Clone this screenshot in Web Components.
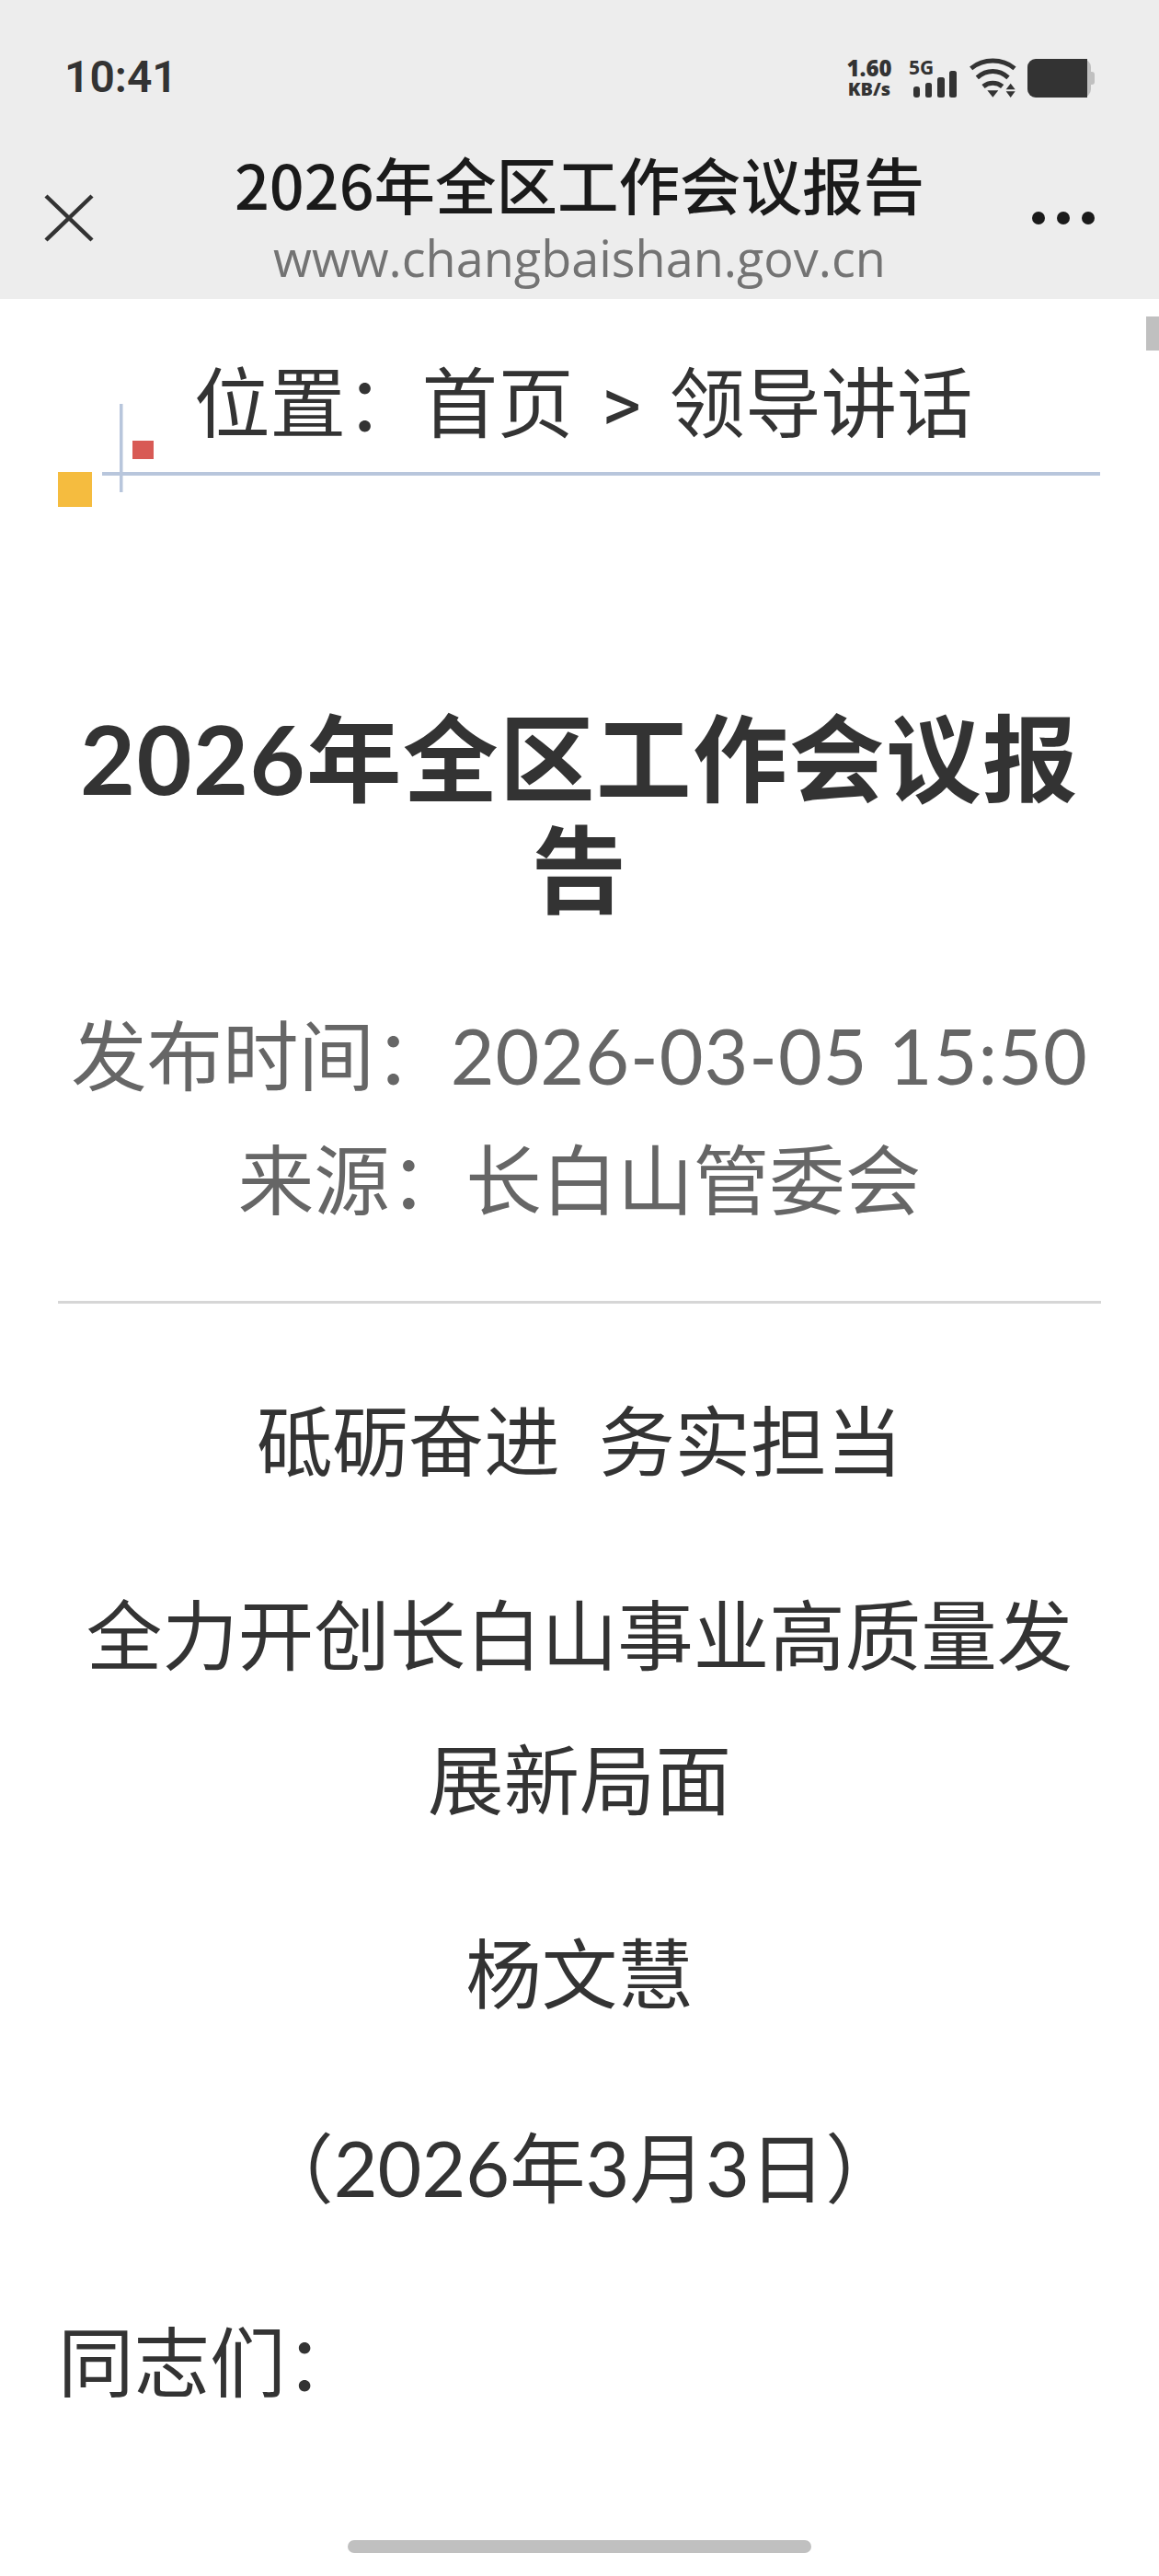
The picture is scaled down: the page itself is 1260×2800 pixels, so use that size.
<!DOCTYPE html>
<html lang="zh-CN">
<head>
<meta charset="utf-8">
<title>2026年全区工作会议报告</title>
<style>
  html, body { margin: 0; padding: 0; background: #fff; }
  body { width: 1260px; height: 2800px; overflow: hidden; position: relative; font-family: Lato, "Noto Sans CJK SC", sans-serif; color: #333; }
</style>
</head>
<body>
<app-chrome page-title="2026年全区工作会议报告" host-name="www.changbaishan.gov.cn"></app-chrome>
<bread-crumb>位置：首页 &gt; 领导讲话</bread-crumb>
<article-head source="来源：长白山管委会" published-label="发布时间：" published="2026-03-05 15:50">2026年全区工作会议报告</article-head>
<article-body>
  <p class="c">砥砺奋进&nbsp;&nbsp;务实担当</p>
  <p class="c">全力开创长白山事业高质量发展新局面</p>
  <p class="c">杨文慧</p>
  <p class="c">（2026年3月3日）</p>
  <p>同志们：</p>
</article-body>
<scroll-marks></scroll-marks>

<script>
class StatusBar extends HTMLElement {
  constructor() {
    super();
    this.attachShadow({ mode: 'open' }).innerHTML = `
<style>
  :host { display: flex; justify-content: space-between; height: 150px; padding: 64px 70px 0 70px; box-sizing: border-box; color: #333; }
  .time { font: 600 48px/40px Roboto, sans-serif; }
  .right { display: flex; align-items: flex-start; height: 42px; }
  .speed { display: flex; flex-direction: column; align-items: center; font: 700 24px/24px "Noto Sans", sans-serif; width: 52px; margin-right: 19px; margin-top: -2px; }
  .speed b:last-child { font-size: 20px; line-height: 22px; }
  .net { position: relative; width: 50px; height: 42px; margin-right: 13px; }
  .net span { position: absolute; left: -2px; top: -2px; font: 700 21px/22px "Noto Sans", sans-serif; }
  svg { display: block; }
  .wifi { margin-right: 12px; margin-top: -2px; }
</style>
<div class="time">10:41</div>
<div class="right">
  <div class="speed"><b>1.60</b><b>KB/s</b></div>
  <div class="net">
    <span>5G</span>
    <svg width="50" height="42" viewBox="0 0 50 42" fill="#333">
      <rect x="3" y="30" width="7" height="12" rx="3"/>
      <rect x="16" y="26" width="7" height="16" rx="2.5"/>
      <rect x="29" y="20" width="8" height="22" rx="2.5"/>
      <rect x="42" y="13" width="8" height="29" rx="2.5"/>
    </svg>
  </div>
  <svg class="wifi" width="52" height="46" viewBox="516 66 156 138" fill="none" stroke="#333">
    <path d="M524 103C565 70 625 70 666 103" stroke-width="15"/>
    <path d="M544 133C575 106 615 106 645 133" stroke-width="15"/>
    <path d="M564 162C582 147 608 147 626 162" stroke-width="15"/>
    <path d="M577 175H613L595 197Z" fill="#333" stroke="none"/>
    <path d="M638 172H668L653 152Z M638 178H668L653 198Z" fill="#333" stroke="none"/>
  </svg>
  <svg width="73" height="42" viewBox="0 0 73 42">
    <rect x="0" y="0" width="69" height="42" rx="9" fill="#c0c0c0"/>
    <path d="M0 9a9 9 0 0 1 9-9H65V42H9a9 9 0 0 1-9-9Z" fill="#333"/>
    <path d="M69 14h1a3 3 0 0 1 3 3v8a3 3 0 0 1-3 3h-1Z" fill="#c0c0c0"/>
  </svg>
</div>`;
  }
}
customElements.define('status-bar', StatusBar);

class NavBar extends HTMLElement {
  constructor() {
    super();
    this.attachShadow({ mode: 'open' }).innerHTML = `
<style>
  :host { display: grid; grid-template-columns: 1fr auto 1fr; align-items: start; height: 175px; padding: 0 70px 0 48px; box-sizing: border-box; }
  .close { margin-top: 61px; display: block; }
  .mid { text-align: center; transform: translateX(11px); }
  .t { font: 500 66.5px/72px "Noto Sans CJK SC", sans-serif; color: #1a1a1a; white-space: nowrap; margin-top: 13px; }
  .u { font: 400 54px/62px "Open Sans", sans-serif; color: #737373; white-space: nowrap; margin-top: 14px; }
  .more { justify-self: end; display: flex; gap: 13px; margin-top: 80px; }
  .more i { width: 14px; height: 14px; border-radius: 50%; background: #1a1a1a; }
</style>
<svg class="close" width="54" height="52" viewBox="0 0 54 52" fill="none" stroke="#333" stroke-width="4.5"><path d="M2 2L52 50M52 2L2 50"/></svg>
<div class="mid"><div class="t"></div><div class="u"></div></div>
<div class="more"><i></i><i></i><i></i></div>`;
  }
  connectedCallback() {
    this.shadowRoot.querySelector('.t').textContent = this.getAttribute('page-title');
    this.shadowRoot.querySelector('.u').textContent = this.getAttribute('host-name');
  }
}
customElements.define('nav-bar', NavBar);

class AppChrome extends HTMLElement {
  constructor() {
    super();
    this.attachShadow({ mode: 'open' }).innerHTML = `
<style>
  :host { display: block; background: #ededed; height: 325px; overflow: hidden; }
</style>
<status-bar></status-bar>
<nav-bar></nav-bar>`;
  }
  connectedCallback() {
    const nav = this.shadowRoot.querySelector('nav-bar');
    nav.setAttribute('page-title', this.getAttribute('page-title'));
    nav.setAttribute('host-name', this.getAttribute('host-name'));
    nav.connectedCallback();
  }
}
customElements.define('app-chrome', AppChrome);

class BreadCrumb extends HTMLElement {
  constructor() {
    super();
    this.attachShadow({ mode: 'open' }).innerHTML = `
<style>
  :host { display: block; position: relative; height: 230px; padding: 66px 0 0 211px; box-sizing: border-box; font: 400 82.5px/100px Roboto, "Noto Sans CJK SC", sans-serif; word-spacing: 10px; color: #333; white-space: nowrap; }
  svg { position: absolute; left: 0; top: 0; }
</style>
<svg width="1260" height="240" viewBox="0 325 1260 240">
  <rect x="111" y="513" width="1085" height="4" fill="#b8c6dc"/>
  <rect x="130" y="439" width="3.5" height="96" fill="#b8c6dc"/>
  <rect x="144" y="479" width="23" height="20" fill="#d85a55"/>
  <rect x="63" y="513" width="37" height="38" fill="#f5bc3f"/>
</svg>
<slot></slot>`;
  }
}
customElements.define('bread-crumb', BreadCrumb);

class ArticleHead extends HTMLElement {
  constructor() {
    super();
    this.attachShadow({ mode: 'open' }).innerHTML = `
<style>
  :host { display: block; margin: 0 63px; padding-top: 209px; border-bottom: 3px solid #d6d6d6; height: 862px; box-sizing: border-box; text-align: center; }
  h1 { margin: 0; font: 700 103.5px/121px Lato, "Noto Sans CJK SC", sans-serif; letter-spacing: 1.5px; color: #333; }
  .meta { margin-top: 74px; font: 400 82.5px/135px Lato, "Noto Sans CJK SC", sans-serif; color: #666; white-space: nowrap; }
  .d { letter-spacing: 1px; }
</style>
<h1><slot></slot></h1>
<div class="meta"><div class="p"></div><div class="s"></div></div>`;
  }
  connectedCallback() {
    const p = this.shadowRoot.querySelector('.p');
    p.textContent = this.getAttribute('published-label');
    const d = document.createElement('span');
    d.className = 'd';
    d.textContent = this.getAttribute('published');
    p.appendChild(d);
    this.shadowRoot.querySelector('.s').textContent = this.getAttribute('source');
  }
}
customElements.define('article-head', ArticleHead);

class ArticleBody extends HTMLElement {
  constructor() {
    super();
    this.attachShadow({ mode: 'open' }).innerHTML = `
<style>
  :host { display: block; margin: 0 63px; padding-top: 71px; font: 400 82.5px/157px Lato, "Noto Sans CJK SC", sans-serif; color: #333; }
  ::slotted(p) { margin: 0 0 54px; }
  ::slotted(p.c) { text-align: center; }
</style>
<slot></slot>`;
  }
}
customElements.define('article-body', ArticleBody);

class ScrollMarks extends HTMLElement {
  constructor() {
    super();
    this.attachShadow({ mode: 'open' }).innerHTML = `
<style>
  :host { display: block; }
  .thumb { position: absolute; right: 0; top: 344px; width: 14px; height: 37px; background: #c0c0c0; }
  .home { position: absolute; left: 378px; top: 2761px; width: 504px; height: 14px; border-radius: 7px; background: #c0c0c0; }
</style>
<div class="thumb"></div>
<div class="home"></div>`;
  }
}
customElements.define('scroll-marks', ScrollMarks);
</script>
</body>
</html>
